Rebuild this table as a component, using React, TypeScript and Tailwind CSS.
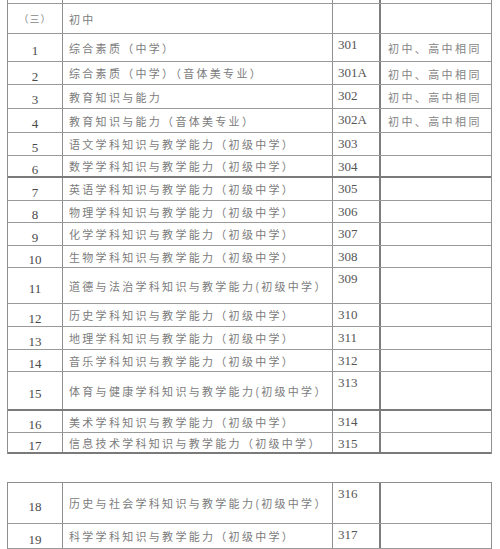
const ROWS_A = [
  { no: "（三）", name: "初中", code: "", note: "", h: 30, head: true },
  { no: "1", name: "综合素质（中学）", code: "301", note: "初中、高中相同", h: 28 },
  { no: "2", name: "综合素质（中学）（音体美专业）", code: "301A", note: "初中、高中相同", h: 23 },
  { no: "3", name: "教育知识与能力", code: "302", note: "初中、高中相同", h: 24 },
  { no: "4", name: "教育知识与能力（音体美专业）", code: "302A", note: "初中、高中相同", h: 24 },
  { no: "5", name: "语文学科知识与教学能力（初级中学）", code: "303", note: "", h: 23 },
  { no: "6", name: "数学学科知识与教学能力（初级中学）", code: "304", note: "", h: 22, thick: true },
  { no: "7", name: "英语学科知识与教学能力（初级中学）", code: "305", note: "", h: 23 },
  { no: "8", name: "物理学科知识与教学能力（初级中学）", code: "306", note: "", h: 22 },
  { no: "9", name: "化学学科知识与教学能力（初级中学）", code: "307", note: "", h: 23 },
  { no: "10", name: "生物学科知识与教学能力（初级中学）", code: "308", note: "", h: 22 },
  { no: "11", name: "道德与法治学科知识与教学能力(初级中学）", code: "309", note: "", h: 36 },
  { no: "12", name: "历史学科知识与教学能力（初级中学）", code: "310", note: "", h: 23 },
  { no: "13", name: "地理学科知识与教学能力（初级中学）", code: "311", note: "", h: 23 },
  { no: "14", name: "音乐学科知识与教学能力（初级中学）", code: "312", note: "", h: 22 },
  { no: "15", name: "体育与健康学科知识与教学能力(初级中学）", code: "313", note: "", h: 39, thick: true },
  { no: "16", name: "美术学科知识与教学能力（初级中学）", code: "314", note: "", h: 22 },
  { no: "17", name: "信息技术学科知识与教学能力（初级中学）", code: "315", note: "", h: 21, thick: true },
];

const ROWS_B = [
  { no: "18", name: "历史与社会学科知识与教学能力(初级中学）", code: "316", note: "", h: 41 },
  { no: "19", name: "科学学科知识与教学能力（初级中学）", code: "317", note: "", h: 25 },
  { no: "", name: "", code: "", note: "", h: 20 },
];

type Row = {
  no: string;
  name: string;
  code: string;
  note: string;
  h: number;
  head?: boolean;
  thick?: boolean;
};

const cjk = { fontFamily: '"Noto Sans CJK SC", sans-serif' };
const serif = { fontFamily: '"Liberation Serif", "Noto Sans CJK SC", serif' };

function TableRow({ row }: { row: Row }) {
  return (
    <div
      className={`flex ${row.thick ? "border-b-2 border-[#7a7a7a]" : "border-b border-[#9a9a9a]"}`}
      style={{ height: row.h }}
    >
      <div
        className={`w-[55px] shrink-0 flex items-center justify-center border-r border-[#8f8f8f] ${row.head ? "text-[10px] tracking-[1px] text-[#888]" : "pt-[7px] text-[13px] text-[#4a4a4a]"}`}
        style={row.head ? cjk : serif}
      >
        {row.no}
      </div>
      <div
        className="w-[270px] shrink-0 flex items-center pl-[6px] pt-[1px] border-r border-[#8f8f8f] text-[11px] tracking-[2.3px] text-[#7c7c7c] whitespace-nowrap overflow-hidden"
        style={cjk}
      >
        {row.name}
      </div>
      <div
        className="w-[48px] shrink-0 flex items-start pl-[5px] pt-[2px] border-r-2 border-[#7d7d7d] text-[13px] leading-[18px] text-[#555]"
        style={serif}
      >
        {row.code}
      </div>
      <div
        className="flex-1 flex items-center pl-[7px] pt-[2px] text-[11px] tracking-[2.4px] text-[#848484] whitespace-nowrap overflow-hidden"
        style={cjk}
      >
        {row.note}
      </div>
    </div>
  );
}

export default function App() {
  return (
    <div className="w-[500px] h-[549px] bg-white overflow-hidden">
      <div className="ml-[7px] w-[485px] border-l border-r border-[#8f8f8f]">
        <div className="flex h-[4px] border-b border-[#9a9a9a]">
          <div className="w-[55px] border-r border-[#8f8f8f]" />
          <div className="w-[270px] border-r border-[#8f8f8f]" />
          <div className="w-[48px] border-r-2 border-[#7d7d7d]" />
          <div className="flex-1" />
        </div>
        {ROWS_A.map((r) => (
          <TableRow key={r.no} row={r} />
        ))}
      </div>
      <div className="mt-[28px] ml-[7px] w-[485px] border-l border-r border-t border-[#8f8f8f]">
        {ROWS_B.map((r, i) => (
          <TableRow key={i} row={r} />
        ))}
      </div>
    </div>
  );
}
